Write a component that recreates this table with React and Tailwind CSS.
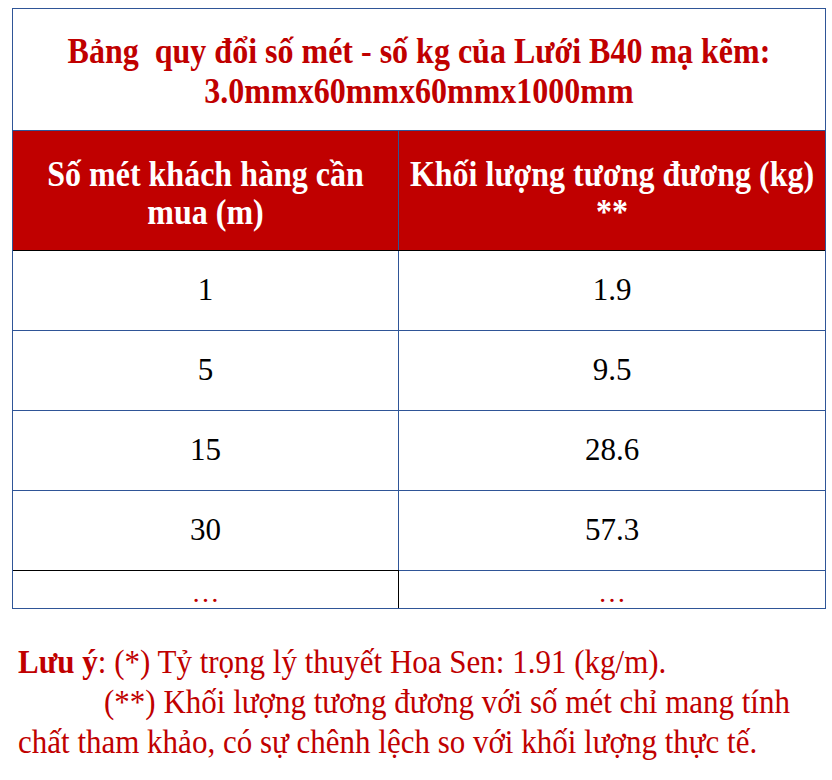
const rows = [
  ['1', '1.9'],
  ['5', '9.5'],
  ['15', '28.6'],
  ['30', '57.3'],
];

export default function App() {
  return (
    <div className="w-[832px] h-[780px] bg-white font-['Liberation_Serif',serif]">
      <div className="pt-[8px] pl-[12px]">
        <div className="w-[814px] border border-[#2f5597]">
          {/* title */}
          <div className="h-[121px] flex items-center justify-center text-center text-[#c00000] font-bold text-[32px] leading-[36px] pt-[2px]">
            <div className="scale-y-[1.12]">
              Bảng&nbsp; quy đổi số mét - số kg của Lưới B40 mạ kẽm:
              <br />
              3.0mmx60mmx60mmx1000mm
            </div>
          </div>
          {/* header */}
          <div className="grid grid-cols-[386px_1fr] bg-[#c00000] text-white font-bold text-[32px] leading-[34px] border-t border-[#2f5597] border-b border-b-black">
            <div className="h-[119px] flex items-center justify-center text-center border-r border-[#2f5597] pt-[4px]">
              <div className="scale-y-[1.12]">Số mét khách hàng cần<br />mua (m)</div>
            </div>
            <div className="h-[119px] flex items-center justify-center text-center pt-[4px]">
              <div className="scale-y-[1.12]">Khối lượng tương đương (kg)<br />**</div>
            </div>
          </div>
          {rows.map((r, i) => (
            <div key={i} className={`grid grid-cols-[386px_1fr] text-[31px] text-black ${i > 0 ? 'border-t border-[#2f5597]' : ''}`}>
              <div className="h-[79px] flex items-center justify-center border-r border-[#2f5597]">{r[0]}</div>
              <div className="h-[79px] flex items-center justify-center">{r[1]}</div>
            </div>
          ))}
          <div className="grid grid-cols-[386px_1fr] text-[28px] text-[#c00000]">
            <div className="h-[38px] flex items-end justify-center border-t border-r border-black leading-[30px]">…</div>
            <div className="h-[38px] flex items-end justify-center border-t border-[#2f5597] leading-[30px]">…</div>
          </div>
        </div>
      </div>
      {/* note */}
      <div className="mt-[33px] px-[18px] text-[#c00000] text-[31px] leading-[40px]">
        <div className="scale-y-[1.1] origin-left"><span className="font-bold">Lưu ý</span>: (*) Tỷ trọng lý thuyết Hoa Sen: 1.91 (kg/m).</div>
        <div className="pl-[86px] scale-y-[1.1] origin-left">(**) Khối lượng tương đương với số mét chỉ mang tính</div>
        <div className="scale-y-[1.1] origin-left">chất tham khảo, có sự chênh lệch so với khối lượng thực tế.</div>
      </div>
    </div>
  );
}
